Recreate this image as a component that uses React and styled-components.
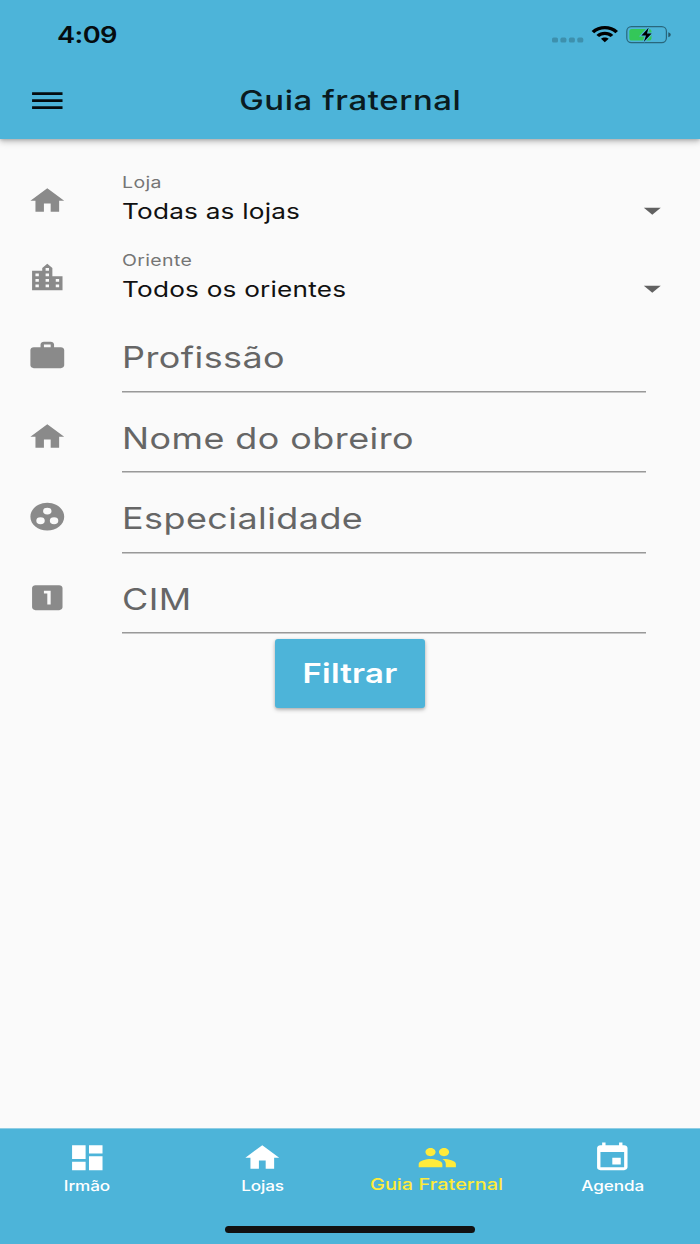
import React from "react";
import styled, { createGlobalStyle } from "styled-components";
import {
  MdArrowDropDown,
  MdDashboard,
  MdEvent,
  MdGroupWork,
  MdHome,
  MdLocationCity,
  MdLooksOne,
  MdMenu,
  MdPeople,
  MdWork,
} from "react-icons/md";

const blue = "#4db4d9";

const GlobalStyle = createGlobalStyle`
  *, *::before, *::after { box-sizing: border-box; }
  body {
    margin: 0;
    background: #fafafa;
    font-family: Inter, "Liberation Sans", sans-serif;
  }
`;

const Screen = styled.div`
  width: 700px;
  height: 1244px;
  display: flex;
  flex-direction: column;
  overflow: hidden;
  background: #fafafa;
`;

/* Wide lettering: every text is stretched horizontally from its anchor edge. */
const Wide = styled.span`
  display: inline-block;
  white-space: nowrap;
  transform: scaleX(1.2176);
  transform-origin: ${(p) => p.$origin || "left"} center;
`;

const Header = styled.header`
  flex: none;
  height: 139px;
  background: ${blue};
  box-shadow: 0 3px 6px rgba(0, 0, 0, 0.22), 0 1px 3px rgba(0, 0, 0, 0.16);
`;

const StatusBar = styled.div`
  height: 61px;
  padding: 9px 28px 0 57px;
  display: flex;
  align-items: center;
  justify-content: space-between;
`;

const Clock = styled(Wide)`
  height: 28px;
  line-height: 27px;
  font-size: 22.4px;
  font-weight: 600;
  letter-spacing: -0.5px;
  color: #050c0f;
`;

const StatusIcons = styled.svg`
  display: block;
  width: 120px;
  height: 18px;
`;

const Toolbar = styled.div`
  height: 78px;
  padding: 1px 27px 0;
  display: grid;
  grid-template-columns: 41px 1fr 41px;
  align-items: center;
`;

const Title = styled.h1`
  margin: 0;
  text-align: center;
  font-size: 27px;
  line-height: 40px;
  font-weight: 450;
  letter-spacing: 0.5px;
  color: #0a1b20;
`;

const Glyph = styled.span`
  flex: none;
  display: block;
  width: 40.6px;
  height: 33.3px;
  color: ${(p) => p.$color};

  svg {
    display: block;
    width: 100%;
    height: 100%;
  }
`;

const Form = styled.main`
  flex: 1;
  padding-top: 22.3px;
  display: flex;
  flex-direction: column;
`;

const Row = styled.div`
  flex: none;
  display: flex;
  height: ${(p) => p.$height}px;
  padding-left: 27px;
`;

const RowIcon = styled.div`
  flex: none;
  width: 95px;
  padding: 22.3px 0 0 0.4px;
`;

const Select = styled.div`
  width: 551px;
  padding-top: 12.7px;
  display: flex;
  flex-direction: column;
  gap: 6px;
`;

const Label = styled.div`
  height: 17px;
  line-height: 17px;
  font-size: 16px;
  letter-spacing: 0.3px;
  color: #757575;
`;

const Value = styled.div`
  height: 28px;
  display: flex;
  align-items: center;
  justify-content: space-between;
  line-height: 28px;
  font-size: 21.5px;
  letter-spacing: 0.17px;
  color: #111;
`;

const Input = styled.div`
  width: 524px;
  height: 74.8px;
  padding: 20.6px 0 0 0.3px;
  border-bottom: 1px solid #999;
  box-shadow: 0 1px #c8c8c8;
  line-height: 40px;
  font-size: 29.5px;
  letter-spacing: 0.37px;
  color: #666;
`;

const Button = styled.button`
  flex: none;
  align-self: center;
  width: 150px;
  height: 69px;
  padding: 0;
  border: 0;
  border-radius: 3px;
  background: ${blue};
  box-shadow: 0 2px 4px rgba(0, 0, 0, 0.22), 0 1px 3px rgba(0, 0, 0, 0.14);
  font-family: inherit;
  font-size: 27px;
  font-weight: 560;
  letter-spacing: 0.2px;
  color: #fff;
`;

const Nav = styled.nav`
  flex: none;
  height: 116px;
  display: flex;
  flex-direction: column;
  align-items: center;
  border-top: 1px solid #8fcde4;
  background: ${blue};
`;

const Tabs = styled.div`
  width: 100%;
  height: 96.6px;
  display: grid;
  grid-template-columns: repeat(4, 1fr);
`;

const Tab = styled.div`
  padding-top: 11.8px;
  display: flex;
  flex-direction: column;
  align-items: center;
  color: ${(p) => (p.$active ? "#ffeb3b" : "#fff")};
`;

const TabLabel = styled(Wide)`
  margin-top: ${(p) => (p.$active ? -0.6 : 1.7)}px;
  padding-right: ${(p) => (p.$active ? 0.8 : 0.3)}px;
  height: 20px;
  line-height: 20px;
  font-size: ${(p) => (p.$active ? 16.3 : 14.1)}px;
  font-weight: 450;
  letter-spacing: ${(p) => (p.$active ? 0.03 : -0.1)}px;
`;

const HomeIndicator = styled.div`
  width: 250px;
  height: 7px;
  border-radius: 4px;
  background: #111;
`;

const selects = [
  { icon: MdHome, label: "Loja", value: "Todas as lojas" },
  { icon: MdLocationCity, label: "Oriente", value: "Todos os orientes" },
];

const inputs = [
  { icon: MdWork, label: "Profissão" },
  { icon: MdHome, label: "Nome do obreiro" },
  { icon: MdGroupWork, label: "Especialidade" },
  { icon: MdLooksOne, label: "CIM" },
];

const tabs = [
  { icon: MdDashboard, label: "Irmão" },
  { icon: MdHome, label: "Lojas" },
  { icon: MdPeople, label: "Guia Fraternal", active: true },
  { icon: MdEvent, label: "Agenda" },
];

function Icon({ as: Shape, color = "#8a8a8a" }) {
  return (
    <Glyph $color={color}>
      <Shape preserveAspectRatio="none" />
    </Glyph>
  );
}

function Status() {
  return (
    <StatusIcons viewBox="552 26 120 18">
      <g fill="#000" fillOpacity="0.2">
        <rect x="552" y="37.6" width="6" height="5" rx="1.6" />
        <rect x="560.4" y="37.6" width="6" height="5" rx="1.6" />
        <rect x="568.9" y="37.6" width="6" height="5" rx="1.6" />
        <rect x="577.3" y="37.6" width="6" height="5" rx="1.6" />
      </g>
      <g fill="#000">
        <path d="M591.6 31.1C598.6 24.4 611.2 24.4 618 31.1L615.4 33.3C609.8 28 599.9 28 594.2 33.3Z" />
        <path d="M596.4 35C601 30.7 608.7 30.7 613.3 35L610.6 37.1C607.3 34.2 602.4 34.2 599.1 37.1Z" />
        <path d="M601 38.8C603 37 606.7 37 608.7 38.8L604.8 42.3Z" />
      </g>
      <rect x="626.8" y="26.7" width="39.6" height="16" rx="4.6" fill="none" stroke="#23596c" strokeOpacity="0.85" strokeWidth="1.2" />
      <path d="M668.3 32.2Q670.8 32.8 670.8 34.7T668.3 37.2Z" fill="#000" fillOpacity="0.5" />
      <rect x="629.3" y="28.9" width="22.2" height="11.6" rx="2.6" fill="#34c759" />
      <path d="M648.6 27.8L641.4 35.5H646L643.9 41.7L651.6 33.5H647Z" fill="#000" stroke={blue} strokeWidth="2.2" paintOrder="stroke" />
    </StatusIcons>
  );
}

export default function App() {
  return (
    <Screen>
      <GlobalStyle />
      <Header>
        <StatusBar>
          <Clock>4:09</Clock>
          <Status />
        </StatusBar>
        <Toolbar>
          <Icon as={MdMenu} color="#050c0f" />
          <Title>
            <Wide $origin="center">Guia fraternal</Wide>
          </Title>
        </Toolbar>
      </Header>

      <Form>
        {selects.map(({ icon, label, value }) => (
          <Row key={label} $height={77.75}>
            <RowIcon>
              <Icon as={icon} />
            </RowIcon>
            <Select>
              <Label>
                <Wide>{label}</Wide>
              </Label>
              <Value>
                <Wide>{value}</Wide>
                <Icon as={MdArrowDropDown} color="#616161" />
              </Value>
            </Select>
          </Row>
        ))}
        {inputs.map(({ icon, label }) => (
          <Row key={label} $height={80.5}>
            <RowIcon>
              <Icon as={icon} />
            </RowIcon>
            <Input>
              <Wide>{label}</Wide>
            </Input>
          </Row>
        ))}
        <Button>
          <Wide $origin="center">Filtrar</Wide>
        </Button>
      </Form>

      <Nav>
        <Tabs>
          {tabs.map(({ icon, label, active }) => (
            <Tab key={label} $active={active}>
              <Icon as={icon} color="inherit" />
              <TabLabel $origin="center" $active={active}>
                {label}
              </TabLabel>
            </Tab>
          ))}
        </Tabs>
        <HomeIndicator />
      </Nav>
    </Screen>
  );
}
